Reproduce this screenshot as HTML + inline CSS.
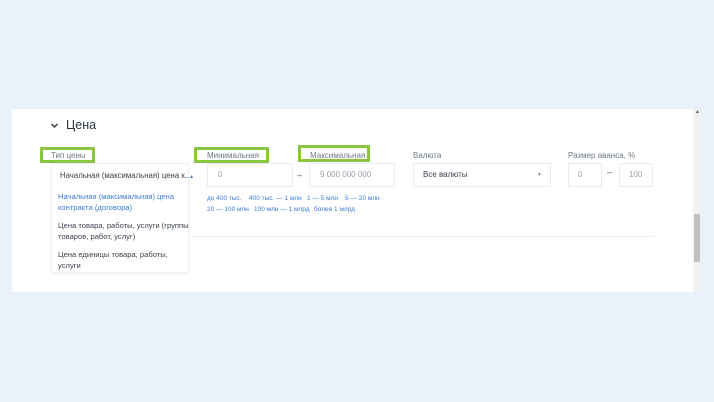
<!DOCTYPE html>
<html><head><meta charset="utf-8"><style>
body{margin:0;width:714px;height:402px;background:#e9f1fb;font-family:"Liberation Sans",sans-serif;position:relative;overflow:hidden}
.a{position:absolute;white-space:nowrap}
.panel{left:12px;top:109px;width:681px;height:183px;background:#fff}
.lbl{font-size:8px;color:#6f7a87}
.g{border:3px solid #8cc63e;box-sizing:border-box}
.inp{border:1px solid #e6ebf1;box-sizing:border-box;background:#fff;font-size:8px;color:#9aa3ad;line-height:22px}
.lk{font-size:6.5px;color:#3a7bd5}
.dd{font-size:7.6px;line-height:11px}
</style></head><body>
<div class="a panel"></div>
<div class="a" style="left:693px;top:109px;width:8px;height:183px;background:#f1f1f1"></div>
<div class="a" style="left:694px;top:214px;width:6px;height:48px;background:#c1c1c1"></div>
<div class="a" style="left:695px;top:109px;font-size:5px;color:#555">▲</div>
<svg class="a" style="left:50px;top:122px" width="9" height="7"><path d="M1.5 2 L4.5 5 L7.5 2" stroke="#334" stroke-width="1.4" fill="none"/></svg>
<div class="a" style="left:66px;top:118px;font-size:12.5px;color:#2c3440">Цена</div>

<div class="a g" style="left:40px;top:147px;width:55px;height:16px"></div>
<div class="a lbl" style="left:51px;top:151px">Тип цены</div>
<div class="a g" style="left:194px;top:147px;width:75px;height:16px"></div>
<div class="a lbl" style="left:207px;top:151px">Минимальная</div>
<div class="a g" style="left:298px;top:145px;width:72px;height:17px"></div>
<div class="a lbl" style="left:310px;top:151px">Максимальная</div>
<div class="a lbl" style="left:413px;top:151px">Валюта</div>
<div class="a lbl" style="left:568px;top:151px">Размер аванса, %</div>

<div class="a" style="left:51px;top:163px;width:138px;height:110px;border:1px solid #eef1f5;box-sizing:border-box;background:#fff;box-shadow:0 1px 3px rgba(0,0,0,.05)"></div>
<div class="a" style="left:60px;top:171px;font-size:7.8px;color:#3b4450">Начальная (максимальная) цена к..<span style="font-size:5px;color:#3a7bd5">▲</span></div>
<div class="a dd" style="left:58px;top:191px;color:#3a7bd5">Начальная (максимальная) цена<br>контракта (договора)</div>
<div class="a dd" style="left:58px;top:220px;color:#3b4450">Цена товара, работы, услуги (группы<br>товаров, работ, услуг)</div>
<div class="a dd" style="left:58px;top:249px;color:#3b4450">Цена единицы товара, работы,<br>услуги</div>

<div class="a inp" style="left:207px;top:163px;width:86px;height:24px;padding-left:10px">0</div>
<div class="a" style="left:297px;top:170px;font-size:9px;color:#555">–</div>
<div class="a inp" style="left:309px;top:163px;width:86px;height:24px;padding-left:10px">9 000 000 000</div>
<div class="a lk" style="left:207px;top:195px">до 400 тыс.</div>
<div class="a lk" style="left:249px;top:195px">400 тыс. — 1 млн</div>
<div class="a lk" style="left:307px;top:195px">1 — 5 млн</div>
<div class="a lk" style="left:345px;top:195px">5 — 20 млн</div>
<div class="a lk" style="left:207px;top:206px">20 — 100 млн</div>
<div class="a lk" style="left:254px;top:206px">100 млн — 1 млрд</div>
<div class="a lk" style="left:314px;top:206px">более 1 млрд</div>

<div class="a inp" style="left:413px;top:163px;width:138px;height:24px;padding-left:9px;color:#3b4450">Все валюты<span style="position:absolute;right:8px;font-size:5px;color:#888">▼</span></div>
<div class="a inp" style="left:568px;top:163px;width:34px;height:24px;padding-left:9px">0</div>
<div class="a" style="left:607px;top:167px;font-size:9px;color:#555">–</div>
<div class="a inp" style="left:619px;top:163px;width:34px;height:24px;padding-left:9px">100</div>

<div class="a" style="left:188px;top:236px;width:467px;height:1px;background:#eef1f5"></div>
</body></html>
